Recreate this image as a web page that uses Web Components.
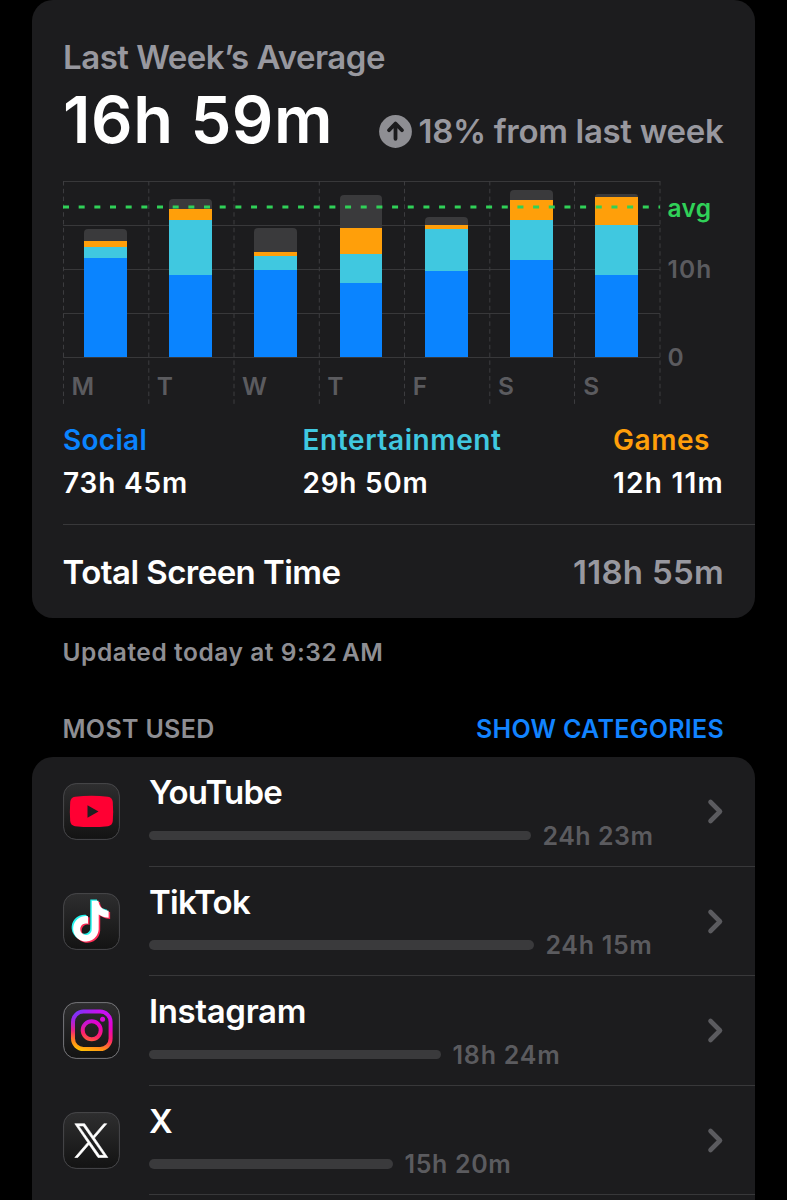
<!DOCTYPE html>
<html lang="en">
<head>
<meta charset="utf-8">
<title>Screen Time</title>
<style>
  html, body {
    margin: 0;
    background: #000;
    height: 1200px;
    overflow: hidden;
  }
  body {
    font-family: Inter, "Liberation Sans", sans-serif;
    font-weight: 560;
    color: #fff;
  }
</style>
</head>
<body>
<screen-time></screen-time>

<script>
// Text set to a fixed advance width by spreading its letters.
class FitText extends HTMLElement {
  constructor() {
    super();
    this.attachShadow({mode: "open"}).innerHTML = `
      <style>
        :host { display: block; flex: none; white-space: nowrap; }
        span { display: inline-block; }
      </style>
      <span><slot></slot></span>`;
  }

  connectedCallback() {
    const width = Number(this.getAttribute("width"));
    this.style.width = width + "px";
    const span = this.shadowRoot.querySelector("span");
    const natural = span.getBoundingClientRect().width;
    const count = this.textContent.length;
    if (width && natural && count > 1) {
      span.style.letterSpacing = ((width - natural) / count).toFixed(3) + "px";
    }
  }
}

class StCard extends HTMLElement {
  constructor() {
    super();
    this.attachShadow({mode: "open"}).innerHTML = `
      <style>
        :host {
          display: block;
          box-sizing: border-box;
          background: #1c1c1e;
          border-radius: 21px;
          overflow: hidden;
        }
      </style>
      <slot></slot>`;
  }
}

class UsageSummary extends HTMLElement {
  constructor() {
    super();
    this.attachShadow({mode: "open"}).innerHTML = `
      <style>
        :host { display: block; padding: 37px 31.5px 0; }
        .title { font-size: 33px; line-height: 40px; color: #98989f; }
        .row {
          display: flex;
          justify-content: space-between;
          align-items: flex-start;
          margin-top: 10px;
        }
        .total { font-size: 65px; line-height: 65px; font-weight: 620; }
        .change {
          display: flex;
          align-items: center;
          gap: 6.5px;
          margin-top: 24px;
          color: #98989f;
          font-size: 33px;
          line-height: 40px;
        }
        svg { width: 33px; height: 33px; }
      </style>
      <fit-text class="title" width="322">Last Week’s Average</fit-text>
      <div class="row">
        <fit-text class="total" width="270">16h 59m</fit-text>
        <div class="change">
          <svg viewBox="0 0 33 33">
            <circle cx="16.5" cy="16.5" r="16.4" fill="#8e8e93"/>
            <path d="M16.5 23.8V9.6M10 15.2l6.5-6.7 6.5 6.7" fill="none" stroke="#1c1c1e" stroke-width="3.8" stroke-linecap="round" stroke-linejoin="round"/>
          </svg>
          <fit-text width="305">18% from last week</fit-text>
        </div>
      </div>`;
  }
}

const DAYS = [
  // label, then heights in px: other, games, entertainment, social
  ["M", 12, 6, 11, 99],
  ["T", 10, 10.5, 55.5, 82],
  ["W", 24.5, 4, 14, 87],
  ["T", 33.5, 26, 29, 74],
  ["F", 8.5, 3.5, 42, 86.5],
  ["S", 9.5, 20, 40.5, 97],
  ["S", 2.5, 28, 50.5, 82]
];

class WeekChart extends HTMLElement {
  constructor() {
    super();
    const days = DAYS.map(([label, other, games, fun, social]) => `
      <div class="day">
        <div class="bar">
          <i style="height:${other}px;background:#3a3a3c"></i>
          <i style="height:${games}px;background:#ff9f0a"></i>
          <i style="height:${fun}px;background:#40c8e0"></i>
          <i style="height:${social}px;background:#0a84ff"></i>
        </div>
        <span>${label}</span>
      </div>`).join("");
    this.attachShadow({mode: "open"}).innerHTML = `
      <style>
        :host { display: flex; margin-left: 31px; height: 223px; font-size: 24.5px; color: #5b5b5f; }
        .plot { position: relative; display: flex; width: 597px; height: 223px; }
        .lines { position: absolute; left: 0; top: 0; width: 598px; height: 224px; overflow: visible; }
        .day { position: relative; flex: 1; display: flex; flex-direction: column; }
        .bar {
          display: flex;
          flex-direction: column;
          justify-content: flex-end;
          height: 176px;
          padding: 0 21.2px;
        }
        i { display: block; flex: none; }
        i:first-child { border-radius: 4px 4px 0 0; }
        span { padding-left: 9px; line-height: 30px; margin-top: 14px; }
        .axis { display: flex; flex-direction: column; padding-left: 8px; line-height: 30px; }
        .avg { color: #30d158; margin-top: 12px; }
        .ten { margin-top: 31px; }
        .zero { margin-top: 58px; }
      </style>
      <div class="plot">
        <svg class="lines" viewBox="0 0 598 224">
          <path d="M0 .5H597M0 44.5H597M0 88.5H597M0 132.5H597M0 176.5H597" stroke="#38383a" fill="none"/>
          <path d="M.5 0V223M85.8 0V223M171 0V223M256.3 0V223M341.5 0V223M426.8 0V223M511.5 0V223M597 0V223" stroke="#3c3c3f" stroke-dasharray="4.5 3.3" fill="none"/>
        </svg>
        ${days}
        <svg class="lines" viewBox="0 0 598 224">
          <path d="M0 26H597" stroke="#30d158" stroke-width="3" stroke-dasharray="6 9.67" fill="none"/>
        </svg>
      </div>
      <div class="axis">
        <fit-text class="avg" width="44">avg</fit-text>
        <fit-text class="ten" width="45">10h</fit-text>
        <div class="zero">0</div>
      </div>`;
  }
}

class CategoryTotal extends HTMLElement {
  constructor() {
    super();
    this.attachShadow({mode: "open"}).innerHTML = `
      <style>
        :host { display: block; font-size: 28px; line-height: 43px; }
        .name { color: var(--tint); }
      </style>
      <div class="name"><slot name="name"></slot></div>
      <slot></slot>`;
  }
}

const ICONS = {
  youtube: `
    <path d="M12 13.8Q28.500 11.600 45 13.800Q49.300 14.500 49.800 19Q50.500 28.500 49.800 38Q49.300 42.500 45 43.200Q28.500 45 12 43.200Q7.700 42.500 7.200 38Q6.500 28.500 7.200 19Q7.700 14.500 12 13.800Z" fill="#ff0033"/>
    <path d="M24.500 22.200L35.500 28.400L24.500 34.700Z" fill="#1f1f20"/>`,
  tiktok: `
    <defs><path id="note" d="M12.525.02c1.31-.02 2.61-.01 3.91-.02.08 1.53.63 3.09 1.75 4.17 1.12 1.11 2.7 1.62 4.24 1.79v4.03c-1.44-.05-2.89-.35-4.2-.97-.57-.26-1.1-.59-1.62-.93-.01 2.92.01 5.84-.02 8.75-.08 1.4-.54 2.79-1.35 3.94-1.31 1.92-3.58 3.17-5.91 3.21-1.43.08-2.86-.31-4.08-1.03-2.02-1.19-3.44-3.37-3.65-5.71-.02-.5-.03-1-.01-1.49.18-1.9 1.12-3.72 2.58-4.96 1.66-1.44 3.98-2.13 6.15-1.72.02 1.48-.04 2.96-.04 4.44-.99-.32-2.15-.23-3.02.37-.63.41-1.11 1.04-1.36 1.75-.21.51-.15 1.07-.14 1.61.24 1.64 1.82 3.02 3.5 2.87 1.12-.01 2.19-.66 2.77-1.61.19-.33.4-.67.41-1.06.1-1.79.06-3.57.07-5.36.01-4.03-.01-8.05.02-12.07z"/></defs>
    <use href="#note" transform="translate(6.000 6.500) scale(1.700)" fill="#25f4ee"/>
    <use href="#note" transform="translate(9.000 8.900) scale(1.700)" fill="#fe2c55"/>
    <use href="#note" transform="translate(7.500 7.700) scale(1.700)" fill="#fff"/>`,
  instagram: `
    <defs>
      <linearGradient id="warm" x1=".3" y1="1" x2=".55" y2="0">
        <stop offset="0" stop-color="#ffc800"/>
        <stop offset=".18" stop-color="#ff8a1c"/>
        <stop offset=".42" stop-color="#ff1f6b"/>
        <stop offset=".68" stop-color="#e800c8"/>
        <stop offset="1" stop-color="#c512f5"/>
      </linearGradient>
      <radialGradient id="cool" cx=".08" cy="0" r=".6">
        <stop offset="0" stop-color="#6a3cff"/>
        <stop offset="1" stop-color="#6a3cff" stop-opacity="0"/>
      </radialGradient>
      <mask id="camera" maskUnits="userSpaceOnUse" x="0" y="0" width="57" height="57">
        <rect x="10" y="9.500" width="37.600" height="37.600" rx="10.500" fill="none" stroke="#fff" stroke-width="4"/>
        <circle cx="28.700" cy="28.300" r="9" fill="none" stroke="#fff" stroke-width="4"/>
        <circle cx="39.600" cy="17.300" r="2.500" fill="#fff"/>
      </mask>
    </defs>
    <g mask="url(#camera)">
      <rect x="7" y="7" width="43" height="43" fill="url(#warm)"/>
      <rect x="7" y="7" width="43" height="43" fill="url(#cool)"/>
    </g>`,
  x: `<path transform="translate(11.800 11.700) scale(1.380 1.410)" d="M14.258 10.152L23.176 0h-2.113l-7.747 8.813L7.133 0H0l9.352 13.328L0 23.973h2.113l8.176-9.309 6.531 9.309h7.133zM2.875 1.560h3.246l14.942 20.900h-3.246z" fill="#fff" fill-rule="evenodd" stroke="#fff" stroke-width=".45"/>`
};

class AppIcon extends HTMLElement {
  constructor() {
    super();
    this.attachShadow({mode: "open"});
  }

  connectedCallback() {
    const name = this.getAttribute("name");
    const edge = name === "instagram" ? "#77777b" : "#48484b";
    this.shadowRoot.innerHTML = `
      <style>
        :host { display: block; width: 57px; height: 57px; }
        svg { display: block; }
      </style>
      <svg width="57" height="57" viewBox="0 0 57 57">
        <defs>
          <linearGradient id="tile" x1="0" y1="0" x2="0" y2="1">
            <stop offset="0" stop-color="#2e2e2f"/>
            <stop offset="1" stop-color="#131313"/>
          </linearGradient>
        </defs>
        <rect x=".6" y=".6" width="55.800" height="55.800" rx="12.500" fill="url(#tile)" stroke="${edge}" stroke-width="1"/>
        ${ICONS[name]}
      </svg>`;
  }
}

class AppRow extends HTMLElement {
  constructor() {
    super();
    this.attachShadow({mode: "open"});
  }

  connectedCallback() {
    this.shadowRoot.innerHTML = `
      <style>
        :host { display: flex; height: 109.5px; padding-left: 31px; }
        app-icon { margin: 26px 29.500px 0 0; }
        .body {
          flex: 1;
          display: flex;
          justify-content: space-between;
          box-sizing: border-box;
          border-bottom: 1px solid #38383a;
          padding-right: 31.5px;
        }
        .name { font-size: 33px; line-height: 40px; margin-top: 15px; }
        .usage { display: flex; align-items: center; gap: 11.5px; height: 26px; margin-top: 10.5px; }
        .bar { height: 9.5px; border-radius: 5px; background: #3a3a3c; }
        .time { font-size: 25px; line-height: 26px; color: #5b5b5f; }
        svg { width: 17px; height: 27px; margin-top: 41px; }
      </style>
      <app-icon name="${this.getAttribute("icon")}"></app-icon>
      <div class="body">
        <div>
          <div class="name"><slot></slot></div>
          <div class="usage">
            <div class="bar" style="width:${this.getAttribute("bar")}px"></div>
            <fit-text class="time" width="${this.getAttribute("time-width")}">${this.getAttribute("time")}</fit-text>
          </div>
        </div>
        <svg viewBox="0 0 17 27">
          <path d="M3.500 4L13 13.500L3.500 23" fill="none" stroke="#5b5b5f" stroke-width="4.600" stroke-linecap="round" stroke-linejoin="round"/>
        </svg>
      </div>`;
  }
}

class ScreenTime extends HTMLElement {
  constructor() {
    super();
    this.attachShadow({mode: "open"}).innerHTML = `
      <style>
        :host {
          display: block;
          box-sizing: border-box;
          height: 1200px;
          overflow: hidden;
          padding: 0 32px 0 31.5px;
        }
        .summary { height: 618px; }
        usage-summary { height: 144px; }
        .totals { display: flex; justify-content: space-between; padding: 15px 31px 0 31.5px; height: 105px; }
        .all {
          display: flex;
          justify-content: space-between;
          align-items: center;
          border-top: 1px solid #38383a;
          margin-left: 31px;
          padding-right: 31px;
          height: 94px;
          font-size: 33px;
        }
        .all :last-child { color: #98989f; }
        .updated { margin: 19px 31px 0; font-size: 24.5px; line-height: 30px; color: #8e8e93; }
        .head {
          display: flex;
          justify-content: space-between;
          margin: 47px 31px 13px;
          font-size: 25px;
          line-height: 30px;
          color: #8e8e93;
        }
        .link { color: #1283ff; }
        .apps { height: 443px; border-radius: 21px 21px 0 0; }
      </style>
      <st-card class="summary">
        <usage-summary></usage-summary>
        <week-chart></week-chart>
        <div class="totals">
          <category-total style="--tint:#0a84ff">
            <fit-text slot="name" width="84">Social</fit-text>
            <fit-text width="125">73h 45m</fit-text>
          </category-total>
          <category-total style="--tint:#40c8e0;margin-left:3px">
            <fit-text slot="name" width="199">Entertainment</fit-text>
            <fit-text width="126">29h 50m</fit-text>
          </category-total>
          <category-total style="--tint:#ff9f0a">
            <fit-text slot="name" width="97">Games</fit-text>
            <fit-text width="111">12h 11m</fit-text>
          </category-total>
        </div>
        <div class="all">
          <fit-text width="278">Total Screen Time</fit-text>
          <fit-text width="151">118h 55m</fit-text>
        </div>
      </st-card>
      <fit-text class="updated" width="321">Updated today at 9:32&#8239;AM</fit-text>
      <div class="head">
        <fit-text width="152">MOST USED</fit-text>
        <fit-text class="link" width="248">SHOW CATEGORIES</fit-text>
      </div>
      <st-card class="apps">
        <app-row icon="youtube" bar="382" time="24h 23m" time-width="111"><fit-text width="133">YouTube</fit-text></app-row>
        <app-row icon="tiktok" bar="385" time="24h 15m" time-width="107"><fit-text width="101">TikTok</fit-text></app-row>
        <app-row icon="instagram" bar="292" time="18h 24m" time-width="108"><fit-text width="157">Instagram</fit-text></app-row>
        <app-row icon="x" bar="244" time="15h 20m" time-width="107"><fit-text width="23">X</fit-text></app-row>
      </st-card>`;
  }
}

customElements.define("fit-text", FitText);
customElements.define("st-card", StCard);
customElements.define("category-total", CategoryTotal);
customElements.define("app-icon", AppIcon);
customElements.define("app-row", AppRow);
customElements.define("usage-summary", UsageSummary);
customElements.define("week-chart", WeekChart);
customElements.define("screen-time", ScreenTime);
</script>
</body>
</html>
